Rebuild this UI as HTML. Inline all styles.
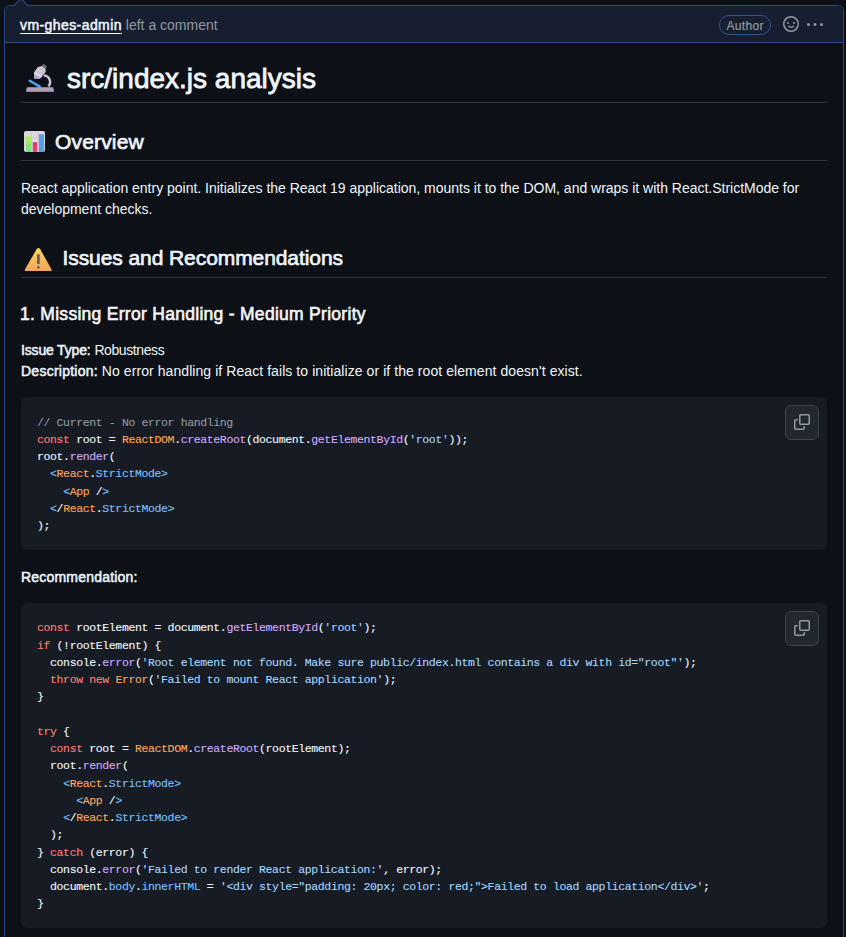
<!DOCTYPE html>
<html><head><meta charset="utf-8">
<style>
*{box-sizing:border-box;}
html,body{margin:0;padding:0;}
body{background:#0d1117;width:846px;height:937px;overflow:hidden;position:relative;font-family:"Liberation Sans",sans-serif;color:#f0f6fc;font-size:14px;line-height:1.5;}
.box{position:absolute;left:4px;top:5px;width:840px;height:1000px;border:1px solid #29477f;border-radius:6px;background:#0d1117;}
.arrow{position:absolute;left:14px;top:0;width:14px;height:7px;}
.hdr{position:absolute;left:0;top:0;right:0;height:37px;background:#171e2f;border-bottom:1px solid #29477f;border-radius:6px 6px 0 0;}
.hdr .who{position:absolute;left:15px;top:9px;white-space:nowrap;}
.who b{font-weight:normal;-webkit-text-stroke:0.5px #f0f6fc;letter-spacing:0.418px;color:#f0f6fc;text-decoration:underline;text-underline-offset:3px;}
.who span{color:#9198a1;}
.lbl{position:absolute;left:714px;top:9px;width:52px;height:20px;border:1px solid #2f5590;border-radius:10px;color:#9198a1;font-size:12px;line-height:20px;text-align:center;letter-spacing:0.3px;text-indent:0.3px;-webkit-text-stroke:0.2px #9198a1;}
.smile{position:absolute;left:778px;top:10.3px;}
.kebab{position:absolute;left:802px;top:11px;}
.body{position:absolute;left:0;top:37px;right:0;padding:16px;}
.md h1,.md h2,.md h3{margin:24px 0 16px;font-weight:normal;line-height:1.25;position:relative;white-space:nowrap;}
.md h1{font-size:28px;padding:2px 0 6.4px 46px;border-bottom:1px solid #2f353d;margin-top:0;letter-spacing:0px;-webkit-text-stroke:0.8px #f0f6fc;}
.md h2{font-size:21px;-webkit-text-stroke:0.65px #f0f6fc;padding:1.6px 0 4.7px 34px;border-bottom:1px solid #2f353d;}
.md h2.iss{padding:2.2px 0 6.1px 41.5px;letter-spacing:-0.079px;}
.md h2.ov{letter-spacing:0.164px;}
.md h3{font-size:17.5px;letter-spacing:0.285px;-webkit-text-stroke:0.6px #f0f6fc;margin-bottom:14.6px;}
.md h3 span{position:relative;top:1.5px;left:-1px;}
.md p{margin:0 0 16px;}
.md p span.t{position:relative;top:1.5px;}
.md b{font-weight:normal;-webkit-text-stroke:0.5px #f0f6fc;}
.emo{position:absolute;}
pre{margin:0 0 16px;background:#161b24;border-radius:6px;padding:16.6px 16px 15.4px;font-family:"Liberation Mono",monospace;font-size:11.5px;letter-spacing:-0.371px;-webkit-text-stroke:0.12px;line-height:17.255px;color:#f0f6fc;position:relative;white-space:pre;overflow:hidden;}
.cp{position:absolute;right:8px;top:8px;width:34px;height:35px;border:1px solid #3d444d;border-radius:6px;background:#212830;}
.cp svg{position:absolute;left:8px;top:8px;}
.k{color:#ff7b72}.v{color:#ffa657}.f{color:#d2a8ff}.s{color:#a5d6ff}.c{color:#9198a1}.b{color:#79c0ff}
</style></head><body>
<svg style="position:absolute;left:0;top:0;z-index:2" width="40" height="8"><path d="M13.5 6.2 L21 -1.3 L28.5 6.2 Z" fill="#171e2f"/><path d="M14.2 5.5 L21 -1.3 L27.8 5.5" fill="none" stroke="#29477f" stroke-width="1.1"/></svg>
<div class="box">
  <div class="hdr">
    <div class="who"><b>vm-ghes-admin</b> <span>left a comment</span></div>
    <div class="lbl">Author</div>
    <svg class="smile" width="16" height="16" viewBox="0 0 16 16" fill="#9198a1"><path d="M8 0a8 8 0 1 1 0 16A8 8 0 0 1 8 0ZM1.5 8a6.5 6.5 0 1 0 13 0 6.5 6.5 0 0 0-13 0Zm3.82 1.636a.75.75 0 0 1 1.038.175l.007.009c.103.118.22.222.35.31.264.178.683.37 1.285.37.602 0 1.02-.192 1.285-.371.13-.088.247-.192.35-.31l.007-.008a.75.75 0 0 1 1.222.87l-.022-.015c.02.013.021.015.021.015v.001l-.001.002-.002.003-.005.007-.014.019a2.066 2.066 0 0 1-.184.213c-.16.166-.338.316-.53.445-.63.418-1.37.638-2.127.629-.946 0-1.652-.308-2.126-.63a3.331 3.331 0 0 1-.715-.657l-.014-.02-.005-.006-.002-.003v-.002h-.001l.613-.432-.614.43a.75.75 0 0 1 .183-1.044ZM12 7a1 1 0 1 1-2 0 1 1 0 0 1 2 0ZM5 8a1 1 0 1 1 0-2 1 1 0 0 1 0 2Z"/></svg>
    <svg class="kebab" width="16" height="16" viewBox="0 0 16 16" fill="#9198a1"><path d="M8 9a1.5 1.5 0 1 0 0-3 1.5 1.5 0 0 0 0 3ZM1.5 9a1.5 1.5 0 1 0 0-3 1.5 1.5 0 0 0 0 3Zm13 0a1.5 1.5 0 1 0 0-3 1.5 1.5 0 0 0 0 3Z"/></svg>
  </div>
  <div class="body md">
    <h1><svg class="emo" style="left:3px;top:3px" width="32" height="32" viewBox="0 0 32 32">
<defs><linearGradient id="tb" x1="0" y1="0" x2="1" y2="1"><stop offset="0" stop-color="#d2ced6"/><stop offset="1" stop-color="#c4bfc9"/></linearGradient>
<linearGradient id="bs" x1="0" y1="0" x2="0" y2="1"><stop offset="0" stop-color="#b0a8ba"/><stop offset="0.7" stop-color="#a89cb4"/><stop offset="1" stop-color="#9a6ccb"/></linearGradient></defs>
<path d="M19.5 13.4 A6.6 6.6 0 0 1 24.4 24.4" fill="none" stroke="#cdc5d6" stroke-width="2.4"/>
<path d="M5.8 18.8 L15.8 24.6" stroke="#4aa6f8" stroke-width="2.4" stroke-linecap="round"/>
<path d="M3.8 25.2 H28.4 Q28.9 25.2 29.2 25.8 L30 28.6 Q30.2 30 29 30 H3 Q1.8 30 2 28.6 L2.9 25.8 Q3.2 25.2 3.8 25.2 Z" fill="url(#bs)"/>
<path d="M17.6 3.6 L19.6 1.8 L23 4.4 L21.8 7 Z" fill="#6f6b74"/>
<path d="M10.1 10.2 L13.9 5 L18 4 L21.4 6.8 L21.7 9.9 L17.4 14.8 Q16.2 17 14.2 17 H11.8 Q10.3 17 10.2 15.4 Z" fill="url(#tb)"/>
<path d="M10.4 10.3 L18.4 14.2 L17.3 15.6 L10.3 12.3 Z" fill="#ecdcf8"/>
<path d="M10.3 12.3 L17.3 15.6 Q16.2 17 14.2 17 H11.8 Q10.3 17 10.2 15.4 Z" fill="#b8a3cd"/>
</svg>src/index.js analysis</h1>
    <h2 class="ov"><svg class="emo" style="left:3px;top:3.8px" width="21" height="21" viewBox="0 0 21 21">
<defs><linearGradient id="gg" x1="0" y1="0" x2="0" y2="1"><stop offset="0" stop-color="#b8f060"/><stop offset="1" stop-color="#6fe080"/></linearGradient>
<linearGradient id="gp" x1="0" y1="0" x2="0" y2="1"><stop offset="0" stop-color="#d8357a"/><stop offset="1" stop-color="#e84a70"/></linearGradient></defs>
<rect x="0" y="0" width="21" height="21" rx="2" fill="#dcd6e2"/>
<path d="M7.4 0 V21 M14.4 0 V21 M0 7 H21 M0 14 H21" stroke="#c5bccb" stroke-width="0.7"/>
<rect x="2" y="5.2" width="5" height="15.8" fill="url(#gg)"/>
<rect x="8.8" y="11.2" width="4.4" height="9.8" fill="url(#gp)"/>
<rect x="15" y="3.2" width="5" height="17.8" fill="#4f9fec"/>
</svg>Overview</h2>
    <p><span class="t" style="letter-spacing:-0.012px">React application entry point. Initializes the React 19 application, mounts it to the DOM, and wraps it with React.StrictMode for development checks.</span></p>
    <h2 class="iss"><svg class="emo" style="left:3px;top:4.8px" width="28" height="24" viewBox="0 0 28 24">
<defs><linearGradient id="wg" x1="0" y1="0" x2="0" y2="1"><stop offset="0" stop-color="#fbd75a"/><stop offset="1" stop-color="#f6a35a"/></linearGradient></defs>
<path d="M12.6 1.2 Q14.4 -1 16.2 1.2 L27.4 21.2 Q28.2 23 26.4 23 H2 Q0.2 23 1 21.2 Z" fill="url(#wg)"/>
<rect x="13.1" y="6.2" width="2.6" height="10" rx="1" fill="#5b5567"/>
<circle cx="14.4" cy="19.2" r="1.25" fill="#5b5567"/>
</svg>Issues and Recommendations</h2>
    <h3><span>1. Missing Error Handling - Medium Priority</span></h3>
    <p><span class="t" style="top:0.9px"><b style="letter-spacing:-0.17px">Issue Type:</b> <span style="letter-spacing:-0.4px">Robustness</span><br><b style="letter-spacing:0.252px">Description:</b> <span style="letter-spacing:0.07px">No error handling if React fails to initialize or if the root element doesn't exist.</span></span></p>
<pre><span class="c">// Current - No error handling</span>
<span class="k">const</span> root = <span class="v">ReactDOM</span>.<span class="f">createRoot</span>(document.<span class="f">getElementById</span>(<span class="s">'root'</span>));
root.<span class="f">render</span>(
  <span class="b">&lt;</span><span class="v">React</span>.<span class="b">StrictMode</span><span class="b">&gt;</span>
    <span class="b">&lt;</span><span class="v">App</span> /<span class="b">&gt;</span>
  <span class="b">&lt;</span>/<span class="v">React</span>.<span class="b">StrictMode</span><span class="b">&gt;</span>
);<div class="cp"><svg width="16" height="16" viewBox="0 0 16 16" fill="#9198a1"><path d="M0 6.75C0 5.784.784 5 1.75 5h1.5a.75.75 0 0 1 0 1.5h-1.5a.25.25 0 0 0-.25.25v7.5c0 .138.112.25.25.25h7.5a.25.25 0 0 0 .25-.25v-1.5a.75.75 0 0 1 1.5 0v1.5A1.75 1.75 0 0 1 9.25 16h-7.5A1.75 1.75 0 0 1 0 14.25Z"/><path d="M5 1.75C5 .784 5.784 0 6.75 0h7.5C15.216 0 16 .784 16 1.75v7.5A1.75 1.75 0 0 1 14.25 11h-7.5A1.75 1.75 0 0 1 5 9.25Zm1.75-.25a.25.25 0 0 0-.25.25v7.5c0 .138.112.25.25.25h7.5a.25.25 0 0 0 .25-.25v-7.5a.25.25 0 0 0-.25-.25Z"/></svg></div></pre>
    <p><span class="t"><b style="letter-spacing:0.205px">Recommendation:</b></span></p>
<pre><span class="k">const</span> rootElement = document.<span class="f">getElementById</span>(<span class="s">'root'</span>);
<span class="k">if</span> (!rootElement) {
  console.<span class="f">error</span>(<span class="s">'Root element not found. Make sure public/index.html contains a div with id="root"'</span>);
  <span class="k">throw</span> <span class="k">new</span> <span class="v">Error</span>(<span class="s">'Failed to mount React application'</span>);
}

<span class="k">try</span> {
  <span class="k">const</span> root = <span class="v">ReactDOM</span>.<span class="f">createRoot</span>(rootElement);
  root.<span class="f">render</span>(
    <span class="b">&lt;</span><span class="v">React</span>.<span class="b">StrictMode</span><span class="b">&gt;</span>
      <span class="b">&lt;</span><span class="v">App</span> /<span class="b">&gt;</span>
    <span class="b">&lt;</span>/<span class="v">React</span>.<span class="b">StrictMode</span><span class="b">&gt;</span>
  );
} <span class="k">catch</span> (error) {
  console.<span class="f">error</span>(<span class="s">'Failed to render React application:'</span>, error);
  document.<span class="b">body</span>.<span class="b">innerHTML</span> = <span class="s">'&lt;div style="padding: 20px; color: red;"&gt;Failed to load application&lt;/div&gt;'</span>;
}<div class="cp"><svg width="16" height="16" viewBox="0 0 16 16" fill="#9198a1"><path d="M0 6.75C0 5.784.784 5 1.75 5h1.5a.75.75 0 0 1 0 1.5h-1.5a.25.25 0 0 0-.25.25v7.5c0 .138.112.25.25.25h7.5a.25.25 0 0 0 .25-.25v-1.5a.75.75 0 0 1 1.5 0v1.5A1.75 1.75 0 0 1 9.25 16h-7.5A1.75 1.75 0 0 1 0 14.25Z"/><path d="M5 1.75C5 .784 5.784 0 6.75 0h7.5C15.216 0 16 .784 16 1.75v7.5A1.75 1.75 0 0 1 14.25 11h-7.5A1.75 1.75 0 0 1 5 9.25Zm1.75-.25a.25.25 0 0 0-.25.25v7.5c0 .138.112.25.25.25h7.5a.25.25 0 0 0 .25-.25v-7.5a.25.25 0 0 0-.25-.25Z"/></svg></div></pre>
  </div>
</div>
</body></html>
